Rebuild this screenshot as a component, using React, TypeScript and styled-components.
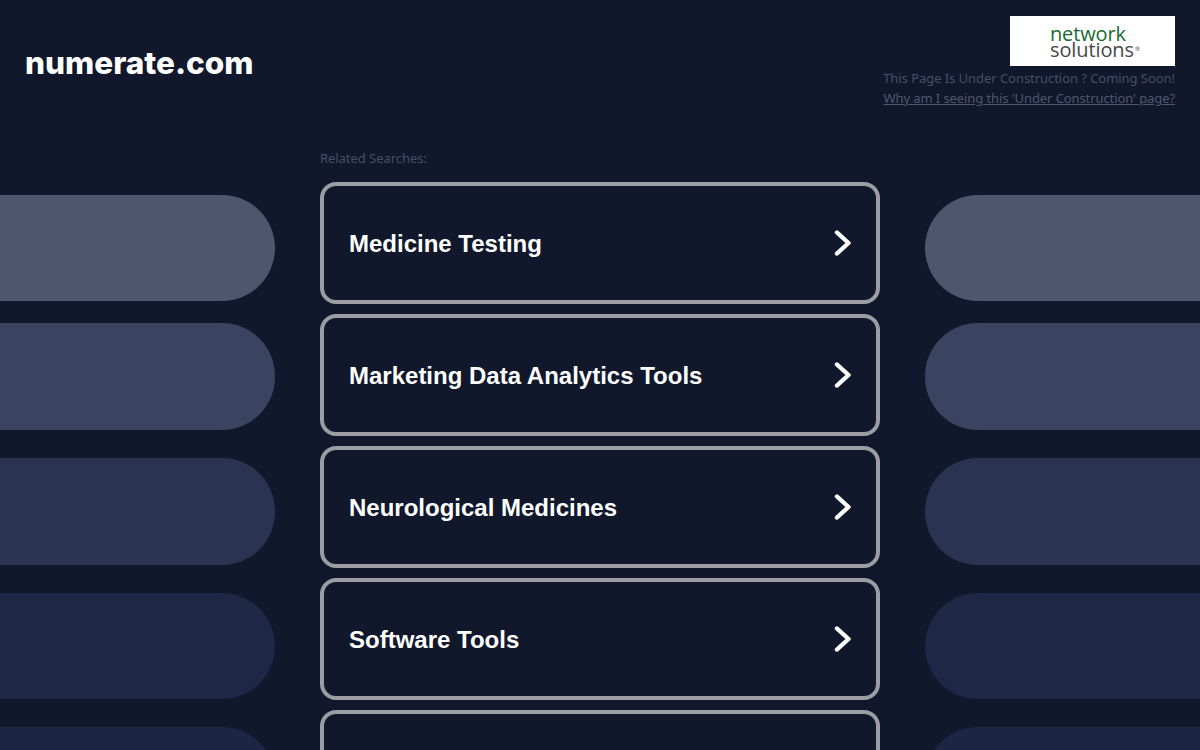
import React from 'react';
import styled, { createGlobalStyle } from 'styled-components';

const searches = [
  'Medicine Testing',
  'Marketing Data Analytics Tools',
  'Neurological Medicines',
  'Software Tools',
  '',
];

const pills = [
  { tone: '#4e566f', height: 106, gap: 0 },
  { tone: '#3a435f', height: 107, gap: 22 },
  { tone: '#2a3351', height: 107, gap: 28 },
  { tone: '#1e2746', height: 106, gap: 28 },
  { tone: '#1d2544', height: 107, gap: 28 },
];

function Chevron() {
  return (
    <ChevronIcon viewBox="0 0 18 28" aria-hidden="true">
      <path d="M3 3.5 L14.5 14 L3 24.5" />
    </ChevronIcon>
  );
}

function Logo() {
  return (
    <LogoBox viewBox="0 0 165 50">
      <LogoText x="40" y="24.5" textLength="76" fill="#17692f">network</LogoText>
      <LogoText x="40" y="40.5" textLength="84" fill="#474747">solutions</LogoText>
      <LogoMark x="125" y="35" fill="#474747">®</LogoMark>
    </LogoBox>
  );
}

function SideColumn({ side }: { side: 'left' | 'right' }) {
  return (
    <PillColumn>
      {pills.map((pill) => (
        <Pill
          key={pill.tone}
          $side={side}
          $tone={pill.tone}
          $height={pill.height}
          $gap={pill.gap}
        />
      ))}
    </PillColumn>
  );
}

export default function App() {
  return (
    <Page>
      <GlobalStyle />
      <Header>
        <DomainName>numerate.com</DomainName>
        <HeaderRight>
          <Logo />
          <Notice>This Page Is Under Construction ? Coming Soon!</Notice>
          <NoticeLink href="#">Why am I seeing this 'Under Construction' page?</NoticeLink>
        </HeaderRight>
      </Header>
      <Main>
        <SideColumn side="left" />
        <Center>
          <RelatedLabel>Related Searches:</RelatedLabel>
          <CardList>
            {searches.map((label, i) => (
              <SearchCard key={i} href="#">
                <CardLabel>{label}</CardLabel>
                <Chevron />
              </SearchCard>
            ))}
          </CardList>
        </Center>
        <SideColumn side="right" />
      </Main>
    </Page>
  );
}

const GlobalStyle = createGlobalStyle`
  html, body {
    margin: 0;
    padding: 0;
    background: #11182c;
  }
  * {
    box-sizing: border-box;
  }
`;

const Page = styled.div`
  width: 1200px;
  height: 750px;
  overflow: hidden;
  background: #11182c;
`;

const Header = styled.header`
  display: flex;
  justify-content: space-between;
  align-items: flex-start;
  height: 148px;
  padding: 16px 25px 0;
`;

const DomainName = styled.h1`
  margin: 27px 0 0;
  font-family: Inter, 'Liberation Sans', sans-serif;
  font-size: 31.5px;
  line-height: 40px;
  font-weight: 800;
  color: #ffffff;
`;

const HeaderRight = styled.div`
  display: flex;
  flex-direction: column;
  align-items: flex-end;
`;

const LogoBox = styled.svg`
  display: block;
  width: 165px;
  height: 50px;
  margin-bottom: 2px;
  background: #ffffff;
`;

const LogoText = styled.text`
  font-family: 'Open Sans', sans-serif;
  font-size: 20px;
`;

const LogoMark = styled.text`
  font-family: 'Open Sans', sans-serif;
  font-size: 6px;
`;

const Notice = styled.div`
  font-family: 'Noto Sans', sans-serif;
  font-size: 13px;
  line-height: 20px;
  letter-spacing: -0.05px;
  color: #474e67;
`;

const NoticeLink = styled.a`
  font-family: 'Noto Sans', sans-serif;
  font-size: 13px;
  line-height: 20px;
  letter-spacing: -0.09px;
  color: #50566f;
  text-decoration: underline;
`;

const Main = styled.main`
  display: grid;
  grid-template-columns: 275px 560px 275px;
  justify-content: space-between;
`;

const PillColumn = styled.div`
  display: flex;
  flex-direction: column;
  padding-top: 47px;
`;

const Pill = styled.div<{ $side: 'left' | 'right'; $tone: string; $height: number; $gap: number }>`
  flex: none;
  height: ${(p) => p.$height}px;
  margin-top: ${(p) => p.$gap}px;
  background: ${(p) => p.$tone};
  border-radius: ${(p) => (p.$side === 'left' ? '0 53px 53px 0' : '53px 0 0 53px')};
`;

const Center = styled.div`
  display: flex;
  flex-direction: column;
`;

const RelatedLabel = styled.div`
  height: 34px;
  padding-top: 1px;
  font-family: 'Noto Sans', sans-serif;
  font-size: 13px;
  line-height: 18px;
  letter-spacing: -0.05px;
  color: #474e67;
`;

const CardList = styled.div`
  display: flex;
  flex-direction: column;
  gap: 10px;
`;

const SearchCard = styled.a`
  display: flex;
  flex: none;
  justify-content: space-between;
  align-items: center;
  height: 122px;
  padding: 0 25px;
  border: 4px solid #9c9da2;
  border-radius: 16px;
  font-family: 'Liberation Sans', Arial, sans-serif;
  font-size: 24px;
  font-weight: 700;
  color: #ffffff;
  text-decoration: none;
`;

const CardLabel = styled.span`
  padding-top: 2px;
`;

const ChevronIcon = styled.svg`
  width: 18px;
  height: 28px;
  fill: none;
  stroke: #ffffff;
  stroke-width: 4.4;
  stroke-linecap: round;
  stroke-linejoin: round;
  margin-right: -1px;
`;
